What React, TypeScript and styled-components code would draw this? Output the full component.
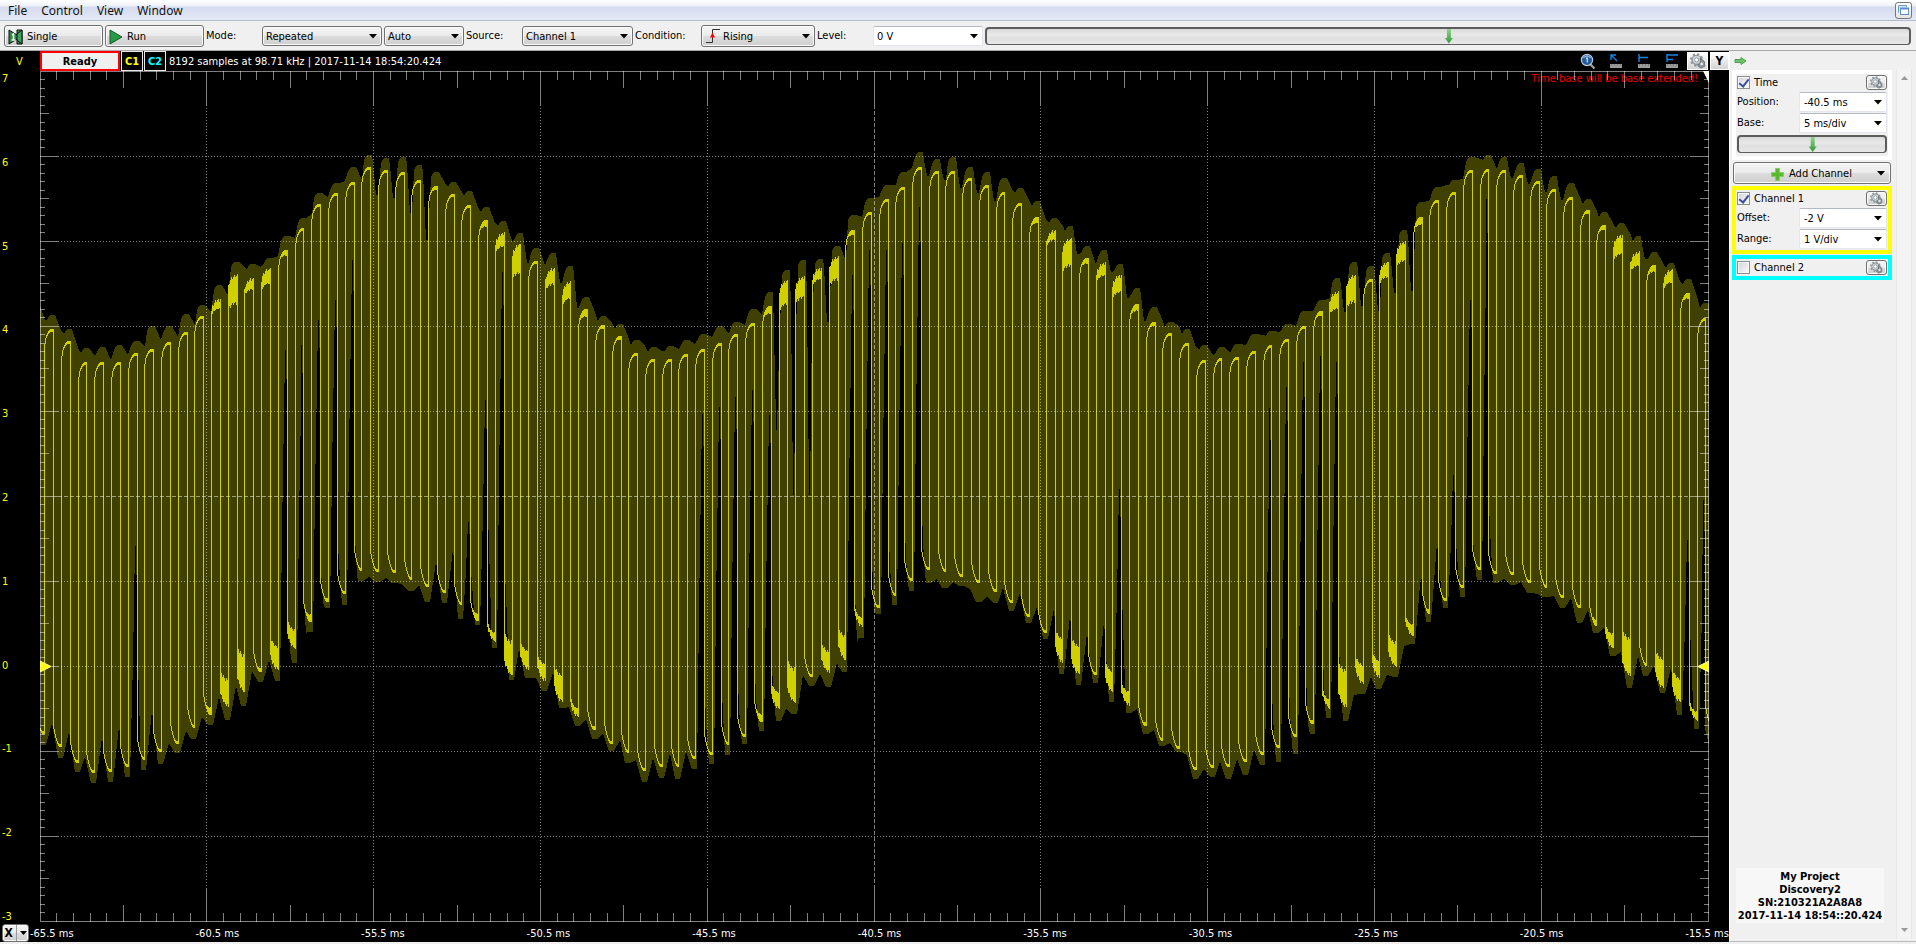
import React from "react";
import styled, { createGlobalStyle, css } from "styled-components";

const GlobalStyle = createGlobalStyle`
  * { box-sizing: border-box; }
  html, body { margin: 0; background: #f0f0f0; }
  body, button, select, input {
    font-family: "DejaVu Sans Condensed", "Noto Sans", sans-serif;
    font-size: 11px;
    line-height: 14px;
    color: #000;
  }
`;

/* ---------- shell ---------- */

const Shell = styled.div`
  display: flex;
  flex-direction: column;
  min-height: 100vh;
  padding-bottom: 2px;
`;

const MenuBar = styled.nav`
  display: flex;
  align-items: center;
  gap: 14px;
  height: 21px;
  padding: 0 4px 0 8px;
  background: linear-gradient(#fff 0, #eef1f8 6px, #d4dbee 7px, #e3e8f6 19px);
  border-bottom: 1px solid #b4bccb;
`;

const MenuItem = styled.button`
  padding: 1px 0 0;
  border: 0;
  background: none;
  font-family: "Noto Sans", sans-serif;
  font-size: 12px;
  color: #111;
`;

const RestoreButton = styled.button`
  display: grid;
  place-items: center;
  width: 17px;
  height: 17px;
  margin-left: auto;
  padding: 0;
  border: 1px solid #777;
  border-radius: 3px;
  background: linear-gradient(#fff, #e4e4e4);
`;

const raised = css`
  border: 1px solid #707070;
  border-radius: 3px;
  background: linear-gradient(#f4f4f4 0, #ebebeb 50%, #dcdcdc 51%, #cfcfcf 100%);
  box-shadow: inset 0 0 0 1px #fbfbfb;
`;

const Toolbar = styled.div`
  display: flex;
  align-items: center;
  gap: 2px;
  height: 30px;
  padding: 0 5px 0 4px;
  background: #f0f0f0;
  border-bottom: 1px solid #a8a8a8;
`;

const ActionButton = styled.button`
  ${raised}
  display: flex;
  flex: none;
  align-items: center;
  gap: 4px;
  width: 99px;
  height: 22px;
  padding: 2px 3px 0;
`;

const ToolLabel = styled.label<{ $w: number }>`
  flex: none;
  width: ${(p) => p.$w}px;
`;

const SelectBox = styled.span<{ $w?: number; $flat?: boolean; $h?: number }>`
  position: relative;
  display: flex;
  flex: none;
  width: ${(p) => (p.$w ? `${p.$w}px` : "auto")};
  height: ${(p) => p.$h ?? 20}px;
`;

const NativeSelect = styled.select<{ $flat?: boolean; $pad?: number }>`
  ${raised}
  appearance: none;
  width: 100%;
  height: 100%;
  padding: 2px 16px 0 ${(p) => p.$pad ?? 3}px;
  ${(p) =>
    p.$flat &&
    css`
      background: #fff;
      border: 1px solid #e3e6ee;
      border-top-color: #b4b8c2;
      border-radius: 2px;
      box-shadow: none;
    `}
`;

const Caret = styled.svg<{ $right?: number }>`
  position: absolute;
  right: ${(p) => p.$right ?? 5}px;
  top: calc(50% - 2px);
  pointer-events: none;
`;

const LeadIcon = styled.span`
  position: absolute;
  left: 4px;
  top: 3px;
  pointer-events: none;
  line-height: 0;
`;

const SliderTrack = styled.div<{ $h: number }>`
  position: relative;
  display: flex;
  flex: 1;
  height: ${(p) => p.$h}px;
  border: 2px solid #5c5c5c;
  border-bottom-width: 1px;
  border-radius: 4px;
  background: linear-gradient(#d9d9d9, #e9e9e9 40%, #dfdfdf 60%, #e8e8e8);
`;

const SliderInput = styled.input`
  appearance: none;
  flex: 1;
  min-width: 0;
  margin: 0;
  background: none;
  &::-webkit-slider-thumb {
    appearance: none;
    width: 8px;
    height: 15px;
    background: linear-gradient(#8fd48a, #2f9a3a);
    clip-path: polygon(25% 0, 75% 0, 75% 64%, 100% 64%, 50% 100%, 0 64%, 25% 64%);
  }
`;

/* ---------- scope ---------- */

const Workspace = styled.main`
  display: grid;
  flex: 1;
  grid-template-columns: 1fr 187px;
`;

const Scope = styled.section`
  display: grid;
  grid-template-columns: 40px 1fr 20px;
  grid-template-rows: 20px 1fr 20px;
  min-width: 0;
  background: #000;
  color: #fff;
`;

const Unit = styled.div`
  padding: 4px 0 0 16px;
  color: #ff0;
`;

const StatusBar = styled.div`
  grid-column: 2 / 4;
  display: flex;
  align-items: stretch;
`;

const Ready = styled.div`
  width: 80px;
  margin-right: 1px;
  padding-top: 2px;
  border: 2px solid #f00;
  background: #f0f0f0;
  color: #000;
  font-weight: bold;
  text-align: center;
`;

const ChannelTag = styled.button<{ $c: string }>`
  width: 22px;
  margin-right: 1px;
  padding: 2px 0 0;
  border: 1px solid #e6e6e6;
  background: #000;
  color: ${(p) => p.$c};
  font-weight: bold;
`;

const SampleInfo = styled.div`
  flex: 1;
  padding: 4px 0 0 2px;
  white-space: nowrap;
`;

const ScopeTools = styled.div`
  display: flex;
  align-items: center;
  gap: 12px;
`;

const ToolButton = styled.button`
  width: 16px;
  height: 18px;
  padding: 0;
  border: 0;
  background: none;
  line-height: 0;
`;

const SquareGroup = styled.div`
  display: flex;
  align-items: center;
  gap: 2px;
  margin-left: -5px;
`;

const SquareButton = styled.button<{ $w: number }>`
  display: grid;
  place-items: center;
  width: ${(p) => p.$w}px;
  height: 18px;
  padding: 0;
  border: 1px solid #fff;
  background: linear-gradient(#fff, #d4d4d4);
  font-weight: bold;
  font-size: 12px;
`;

const YAxis = styled.div`
  display: flex;
  flex-direction: column;
  justify-content: space-between;
  padding: 1px 0 0 2px;
  margin-bottom: -2px;
  color: #ff0;
`;

const Plot = styled.div`
  position: relative;
  min-height: 400px;
`;

const PlotSvg = styled.svg`
  position: absolute;
  inset: 0;
  width: 100%;
  height: 100%;
`;

const Warning = styled.div`
  position: absolute;
  top: 1px;
  right: 11px;
  color: #f00000;
`;

const XAxis = styled.div`
  grid-column: 1 / 4;
  display: flex;
  align-items: center;
  gap: 1px;
  padding: 2px 0 0 2px;
`;

const SplitButton = styled.button`
  ${raised}
  display: flex;
  align-items: center;
  justify-content: space-around;
  width: 27px;
  height: 18px;
  padding: 0;
  font-weight: bold;
  font-size: 12px;
`;

const Divider = styled.span`
  width: 1px;
  height: 16px;
  background: #999;
`;

const XLabels = styled.div`
  display: flex;
  flex: 1;
  justify-content: space-between;
  padding-top: 2px;
  white-space: nowrap;
`;

/* ---------- side panel ---------- */

const Side = styled.aside`
  display: grid;
  grid-template-columns: 1fr 16px;
  grid-template-rows: 18px 1fr;
  column-gap: 4px;
  padding: 0 4px 2px 2px;
  background: #f0f0f0;
  border-left: 1px solid #fff;
  border-bottom: 1px solid #bbb;
`;

const PinButton = styled.button`
  grid-column: 1 / 3;
  width: 16px;
  padding: 2px 0 0;
  border: 0;
  background: none;
  line-height: 0;
`;

const Panels = styled.div`
  display: flex;
  flex-direction: column;
  gap: 1px;
  padding-top: 1px;
`;

const Group = styled.section<{ $c: string }>`
  display: flex;
  flex-direction: column;
  gap: 1px;
  padding: 1px;
  border: 4px solid ${(p) => p.$c};
  background: #f0f0f0;
`;

const GroupHead = styled.div`
  display: flex;
  align-items: center;
  justify-content: space-between;
  height: 15px;
  &:not(:last-child) {
    margin-bottom: 1px;
  }
`;

const CheckLabel = styled.label`
  display: flex;
  align-items: center;
  gap: 4px;
`;

const Check = styled.input`
  appearance: none;
  width: 13px;
  height: 13px;
  margin: 0;
  border: 1px solid #8a8f94;
  background: linear-gradient(135deg, #d0d4da, #fafafa) #fff;
  box-shadow: inset 0 0 0 1px #f6f6f6;
  display: grid;
  place-items: center;
  &:checked::after {
    content: "";
    width: 4px;
    height: 8px;
    margin-top: -2px;
    border: solid #3c4f9c;
    border-width: 0 2px 2px 0;
    transform: rotate(38deg);
  }
`;

const GearButton = styled.button`
  ${raised}
  display: grid;
  place-items: center;
  width: 21px;
  height: 15px;
  padding: 0;
`;

const Field = styled.div`
  display: grid;
  grid-template-columns: 62px 1fr;
  align-items: center;
  height: 20px;
`;

const SliderRow = styled.div`
  display: flex;
  padding: 1px 0 2px;
`;

const AddButton = styled.button`
  ${raised}
  position: relative;
  display: flex;
  align-items: center;
  justify-content: center;
  gap: 4px;
  height: 22px;
  margin: 1px;
  padding: 2px 2px 0 0;
`;

const Info = styled.div`
  width: 148px;
  margin: auto 0 16px 4px;
  padding: 2px 0 1px;
  background: #f7f7f7;
  font-weight: bold;
  line-height: 13px;
  text-align: center;
  white-space: nowrap;
`;

const ScrollBar = styled.div`
  display: flex;
  flex-direction: column;
  justify-content: space-between;
  align-items: center;
  padding: 5px 0;
  background: #f3f3f3;
  border: solid #e8e8e8;
  border-width: 0 1px;
`;

const ScrollArrow = styled.button`
  padding: 0;
  border: 0;
  background: none;
  line-height: 0;
`;

/* ---------- icons ---------- */

const DownArrow = ({ right }: { right?: number }) => (
  <Caret width="8" height="5" viewBox="0 0 8 5" $right={right}>
    <path d="M0 0H8L4 4.5Z" fill="#000" />
  </Caret>
);

const Gear = ({ size = 14 }: { size?: number }) => (
  <svg width={size} height={size} viewBox="0 0 14 14">
    <circle cx="5.8" cy="6" r="5" fill="none" stroke="#8b959b" strokeWidth="1.6" strokeDasharray="2 1.9" />
    <circle cx="5.8" cy="6" r="4" fill="#cfd6d9" stroke="#828d93" />
    <circle cx="5.8" cy="6" r="1.8" fill="#fff" stroke="#8d979c" strokeWidth="0.8" />
    <path d="M9 4.5L12.6 7.5L12.8 11.6L9.4 13.2L6.6 11L9 9Z" fill="#8f999d" stroke="#5f696e" strokeWidth="0.7" />
    <circle cx="10.2" cy="9.6" r="1.2" fill="#e8ecee" />
  </svg>
);

const SingleIcon = () => (
  <svg width="15" height="16" viewBox="0 0 15 16">
    <path d="M1 1L9 6V1H14V15H9V10L1 15Z" fill="#2c8a45" stroke="#111" />
    <path d="M9 5L14 1V15L9 11Z" fill="#3da35a" stroke="#111" />
    <path d="M4 6L5.5 5V11M3.5 11H7.5" fill="none" stroke="#fff" strokeWidth="1.6" />
  </svg>
);

const RunIcon = () => (
  <svg width="14" height="16" viewBox="0 0 14 16">
    <path d="M1 1L13 8L1 15Z" fill="#279a45" stroke="#1a5a2b" />
  </svg>
);

const RisingIcon = () => (
  <svg width="16" height="16" viewBox="0 0 16 16">
    <path d="M1 14.5H7.5V1.5H15" fill="none" stroke="#333" />
    <path d="M7.5 4.5L10 9.5H5Z" fill="#f00" />
  </svg>
);

const ZoomIcon = () => (
  <svg width="16" height="18" viewBox="0 0 16 18">
    <path d="M10 12L14.5 16.5" stroke="#9a9a9a" strokeWidth="2.4" />
    <circle cx="7" cy="8" r="5.6" fill="#235a9c" stroke="#b9c6d4" strokeWidth="1.2" />
    <path d="M3.5 6A4 4 0 0 1 10.5 6" fill="none" stroke="#7fa9d8" strokeWidth="1.4" />
    <path d="M6 6.6L7.2 5.6V10.5" fill="none" stroke="#fff" />
  </svg>
);

const RulerIcon = ({ d }: { d: string }) => (
  <svg width="16" height="18" viewBox="0 0 16 18">
    <rect x="2" y="12" width="12" height="4" fill="#9c9c9c" />
    <path d="M3.5 12V14M6.5 12V14M9.5 12V14M12.5 12V14" stroke="#777" />
    <path d={d} fill="none" stroke="#1786e0" strokeWidth="1.4" />
  </svg>
);

/* ---------- trace data ---------- */

// Screen rows are measured from the window top; the plot starts at row 71.
const TOP = 71;
const LEFT = 40;

const peaks = [
  329, 341, 362, 362, 362, 353, 349, 342, 332, 316, 299, 274, 278, 268, 250, 228, 204, 193, 182, 167,
  170, 172, 180, 186, 194, 205, 220, 232, 244, 261, 268, 281, 309, 325, 336, 353, 359, 359, 354, 349,
  343, 334, 323, 306, 280, 276, 268, 256, 230, 212, 199, 187, 167, 171, 171, 178, 185, 192, 203, 217,
  230, 238, 258, 262, 275, 304, 322, 333, 343, 360, 358, 357, 351, 345, 339, 326, 311, 291, 275, 279,
  262, 241, 217, 200, 192, 170, 169, 170, 175, 181, 189, 197, 210, 225, 235, 251, 265, 269, 293, 318,
];

const troughs = [
  734, 747, 763, 773, 772, 767, 760, 752, 744, 728, 715, 707, 692, 672, 670, 649, 622, 602, 594, 571,
  572, 573, 580, 587, 593, 605, 621, 642, 675, 670, 681, 702, 717, 730, 744, 753, 771, 767, 767, 759,
  755, 745, 737, 722, 709, 703, 677, 673, 660, 627, 608, 596, 581, 570, 572, 577, 583, 592, 603, 617,
  633, 663, 674, 675, 692, 706, 726, 741, 749, 770, 768, 767, 762, 755, 748, 737, 724, 709, 707, 684,
  678, 667, 636, 614, 601, 588, 570, 574, 575, 583, 588, 598, 608, 626, 648, 676, 666, 688, 702, 721, 727,
];

const peakRing: Record<number, number> = {
  10: 10, 11: 30, 12: 12, 13: 16, 14: 6, 23: 4, 26: 7, 27: 15, 28: 30, 30: 17, 31: 18, 32: 8, 33: 4, 34: 4,
  43: 8, 44: 25, 45: 22, 46: 12, 47: 24, 48: 5, 59: 6, 60: 10, 61: 28, 62: 6, 63: 14, 64: 18, 65: 7, 66: 4,
  76: 5, 77: 18, 78: 28, 80: 16, 81: 20, 82: 8, 92: 4, 93: 5, 94: 20, 95: 15, 96: 7, 97: 14, 98: 6,
};

const troughRing: Record<number, number> = {
  10: 8, 11: 28, 12: 38, 13: 4, 14: 25, 15: 20, 16: 8, 17: 4, 26: 8, 27: 10, 28: 35, 29: 20, 30: 18, 31: 28,
  32: 10, 33: 4, 43: 8, 44: 18, 45: 35, 47: 22, 48: 25, 49: 10, 61: 25, 62: 30, 64: 22, 65: 15, 66: 4,
  76: 4, 77: 10, 78: 38, 79: 20, 80: 18, 81: 25, 82: 12, 83: 5, 93: 7, 94: 15, 95: 38, 97: 30, 98: 25, 99: 10,
};

// Noise band: [crest row, row of the notch after it]
const bandTop: [number, number][] = [
  [315, 330], [329, 348], [348, 356], [347, 360], [345, 355], [341, 347], [326, 340], [326, 337], [314, 325],
  [305, 312], [285, 295], [262, 268], [264, 267], [258, 256], [236, 238], [218, 214], [193, 197], [183, 181],
  [167, 180], [155, 195], [158, 198], [157, 213], [165, 240], [172, 183], [182, 192], [191, 207], [207, 223],
  [221, 241], [233, 263], [248, 265], [253, 283], [266, 308], [297, 312], [316, 323], [324, 339], [340, 346],
  [347, 351], [346, 349], [340, 344], [334, 337], [326, 334], [322, 325], [309, 314], [292, 430], [270, 495],
  [260, 495], [259, 322], [246, 261], [215, 217], [198, 197], [185, 185], [172, 168], [152, 176], [159, 180],
  [157, 188], [167, 193], [172, 201], [178, 191], [188, 200], [201, 220], [218, 226], [226, 254], [246, 264],
  [250, 272], [264, 298], [288, 321], [307, 321], [322, 326], [329, 347], [345, 355], [347, 353], [344, 345],
  [334, 335], [331, 332], [324, 326], [311, 311], [300, 298], [278, 312], [262, 306], [266, 311], [253, 293],
  [230, 291], [202, 200], [187, 185], [180, 179], [157, 159], [155, 169], [157, 178], [163, 184], [169, 192],
  [176, 200], [183, 197], [199, 211], [212, 223], [223, 233], [236, 259], [252, 263], [263, 282], [279, 296],
  [303, 312],
];

// Noise band: [floor row, row of the notch after it]
const bandBottom: [number, number][] = [
  [745, 723], [758, 732], [772, 757], [783, 737], [782, 726], [777, 546], [770, 710], [764, 743], [753, 731],
  [739, 717], [725, 697], [720, 686], [706, 671], [682, 660], [681, 350], [663, 345], [632, 320], [608, 300],
  [605, 260], [581, 577], [582, 578], [583, 585], [591, 585], [602, 562], [603, 548], [619, 522], [625, 400],
  [648, 272], [680, 649], [678, 678], [691, 672], [708, 707], [726, 719], [739, 733], [751, 740], [763, 760],
  [782, 758], [778, 753], [779, 752], [769, 414], [764, 407], [755, 397], [744, 390], [731, 415], [721, 709],
  [714, 675], [686, 674], [687, 663], [672, 275], [638, 250], [614, 250], [605, 243], [591, 207], [583, 579],
  [588, 582], [586, 589], [602, 596], [603, 588], [611, 593], [623, 607], [639, 609], [674, 615], [685, 633],
  [683, 621], [702, 489], [713, 709], [734, 730], [746, 743], [752, 755], [779, 769], [777, 761], [779, 759],
  [775, 750], [765, 408], [762, 387], [754, 362], [734, 356], [718, 362], [721, 695], [694, 677], [689, 675],
  [677, 646], [644, 574], [622, 542], [608, 475], [597, 300], [580, 199], [583, 579], [585, 582], [593, 594],
  [597, 596], [608, 598], [623, 610], [633, 627], [656, 652], [688, 656], [676, 666], [693, 668], [715, 540],
  [729, 500],
];

const riseAt = (k: number) => Math.floor(44.7 + 16.69 * k) - LEFT;
const fallAt = (k: number) => Math.floor(44.7 + 16.69 * k + 8.9) - LEFT;

function buildTrace() {
  const d: string[] = [];
  const column = (x: number, a: number, b: number) => d.push(`M${x + 0.5} ${a - TOP}V${b - TOP}`);
  const attack = [30, 15, 9, 6, 4, 2, 1, 0, 0, 0, 0];
  const decay = [28, 18, 13, 9, 6, 3, 1, 0, 0, 0, 0];
  const noise = (k: number, i: number) => ((i * 7 + k * 5 + i * i * 3) % 6) / 6;

  peaks.forEach((top, k) => {
    const r = riseAt(k);
    const f = fallAt(k);
    const ring = peakRing[k] ?? 0;
    const wild = ring > 9;
    column(r, top + 22, troughs[k]);
    for (let i = 0; i < f - r; i++) {
      const y = top + attack[i + 1] * (wild ? 0.7 : 1) + (wild ? noise(k, i) * 4 : 0);
      const joined = top + attack[i];
      const body = ring && i ? top + attack[i + 1] * 0.5 + ring * (0.9 + noise(k, i + 2) * 0.15) : 0;
      column(r + i, y, Math.max(y + 3, joined, body));
    }
    column(f, top, troughs[k + 1] - 22);
  });

  troughs.forEach((low, k) => {
    const f = k ? fallAt(k - 1) : -4;
    const r = k < peaks.length ? riseAt(k) : f + 8;
    const ring = troughRing[k] ?? 0;
    const wild = ring > 9;
    for (let i = 0; i <= r - f; i++) {
      const y = low - decay[i + 1] * (wild ? 0.7 : 1) - (wild ? noise(k, i) * 4 : 0);
      const joined = low - decay[i];
      const body = ring && i ? low - decay[i + 1] * 0.5 - ring * (0.9 + noise(k, i + 1) * 0.15) : y;
      column(f + i, Math.min(y - 3, joined, body), y);
    }
  });
  return d.join("");
}

function buildBand() {
  const pts: [number, number][] = [[0, 306], [5, 320]];
  bandTop.forEach(([crest, notch], k) => {
    const r = riseAt(k);
    const next = r + 17;
    pts.push([r + 3, crest + 5], [r + 5, crest + 1], [r + 7, crest], [r + 11, crest]);
    if (notch - crest > 100) {
      pts.push([r + 12, crest + 40], [r + 14, notch - 10], [r + 14, notch], [next - 2, notch], [next, crest + 60]);
    } else if (notch - crest > 20) {
      pts.push([r + 12, crest + 8], [next - 2, notch], [next, notch]);
    } else {
      pts.push([next, notch]);
    }
  });
  pts.push([1669, 318]);
  const low: [number, number][] = [];
  bandBottom.forEach(([floor, notch], k) => {
    const r = riseAt(k);
    const f = fallAt(k);
    const span = floor - notch;
    low.push([r - 3, floor], [r + 2, floor]);
    if (span > 240) {
      low.push(
        [r + 3, floor - span * 0.2],
        [r + 4, floor - span * 0.45],
        [r + 6, notch + span * 0.2],
        [f - 2, notch],
        [f - 1, notch],
        [f + 1, notch + span * 0.35],
        [f + 1, floor - span * 0.2],
        [f + 3, floor - 30],
      );
    } else if (span > 90) {
      low.push([r + 5, floor - span * 0.5], [f - 2, notch], [f - 1, notch], [f + 1, notch + span * 0.5]);
    } else {
      low.push([f - 1, notch]);
    }
  });
  low.push([1665, 729], [1669, 745]);
  return [...pts, ...low.reverse()].map(([x, y]) => `${x},${y - TOP}`).join(" ");
}

function buildTicks() {
  const d: string[] = [];
  for (let j = 1; j < 100; j++) {
    const x = Math.floor(16.68 * j) + 0.5;
    const len = j % 10 === 0 ? 34 : j % 5 === 0 ? 17 : 9;
    d.push(`M${x} 0V${len}M${x} 851V${851 - len}`);
    const y = Math.floor(8.5 * j) + 0.5;
    const w = j % 10 === 0 ? 18 : j % 5 === 0 ? 9 : 5;
    d.push(`M0 ${y}H${w}M1669 ${y}H${1669 - w}`);
  }
  return d.join("");
}

const trace = buildTrace();
const band = buildBand();
const ticks = buildTicks();
const divisions = [1, 2, 3, 4, 5, 6, 7, 8, 9];

const Waveform = () => (
  <PlotSvg viewBox="0 0 1669 851" preserveAspectRatio="none" shapeRendering="crispEdges" role="img" aria-label="Channel 1 waveform">
    <polygon points={band} fill="#404000" />
    <path d={trace} stroke="#d0d000" fill="none" />
    <g stroke="#fff" strokeOpacity="0.5" fill="none">
      {divisions.map((i) => (
        <g key={i}>
          <path d={`M${Math.floor(166.8 * i) + 0.5} 34V817`} strokeDasharray={i === 5 ? "4 2" : "1 2"} />
          <path d={`M18 ${85 * i + 0.5}H1651`} strokeDasharray={i === 5 ? "4 2" : "1 2"} />
        </g>
      ))}
      <path d={ticks} />
      <rect x="0.5" y="0.5" width="1668" height="850" />
    </g>
    <g shapeRendering="auto">
      <path d="M1663 0H1669V12Z" fill="#fff" />
      <path d="M0 590L11 595.5L0 601Z" fill="#ff0" stroke="#ffffb0" />
      <path d="M1669 590L1658 595.5L1669 601Z" fill="#ff0" stroke="#ffffb0" />
    </g>
  </PlotSvg>
);

/* ---------- controls ---------- */

type DropProps = { id: string; value: string; w?: number; h?: number; flat?: boolean; pad?: number; icon?: React.ReactNode };

const Drop = ({ id, value, w, h, flat, pad, icon }: DropProps) => (
  <SelectBox $w={w} $h={h}>
    <NativeSelect id={id} aria-label={id} $flat={flat} $pad={pad}>
      <option>{value}</option>
    </NativeSelect>
    {icon && <LeadIcon>{icon}</LeadIcon>}
    <DownArrow />
  </SelectBox>
);

const Slider = ({ label, value, h }: { label: string; value: number; h: number }) => (
  <SliderTrack $h={h}>
    <SliderInput type="range" aria-label={label} min={0} max={1000} defaultValue={value} />
  </SliderTrack>
);

const Header = ({ name, checked }: { name: string; checked?: boolean }) => (
  <GroupHead>
    <CheckLabel>
      <Check type="checkbox" defaultChecked={checked} />
      {name}
    </CheckLabel>
    <GearButton aria-label={`${name} settings`}>
      <Gear size={13} />
    </GearButton>
  </GroupHead>
);

const Setting = ({ id, label, value }: { id: string; label: string; value: string }) => (
  <Field>
    <label htmlFor={id}>{label}</label>
    <Drop id={id} value={value} flat pad={4} />
  </Field>
);

export default function App() {
  return (
    <Shell>
      <GlobalStyle />
      <MenuBar>
        {["File", "Control", "View", "Window"].map((m) => (
          <MenuItem key={m}>{m}</MenuItem>
        ))}
        <RestoreButton aria-label="Restore window">
          <svg width="13" height="12" viewBox="0 0 13 12">
            <path d="M1.5 8.5V1.5H9.5V3" fill="#dbe9f8" stroke="#6c9bd2" />
            <rect x="3.5" y="4.5" width="8" height="6" fill="#fff" stroke="#5c8fcc" />
            <path d="M3 4.5H12" stroke="#5c8fcc" strokeWidth="2" />
          </svg>
        </RestoreButton>
      </MenuBar>

      <Toolbar>
        <ActionButton>
          <SingleIcon />
          Single
        </ActionButton>
        <ActionButton>
          <RunIcon />
          Run
        </ActionButton>
        <ToolLabel $w={54} htmlFor="mode">Mode:</ToolLabel>
        <Drop id="mode" value="Repeated" w={120} />
        <Drop id="trigger" value="Auto" w={80} />
        <ToolLabel $w={54} htmlFor="source">Source:</ToolLabel>
        <Drop id="source" value="Channel 1" w={111} />
        <ToolLabel $w={64} htmlFor="condition">Condition:</ToolLabel>
        <Drop id="condition" value="Rising" w={114} h={22} pad={21} icon={<RisingIcon />} />
        <ToolLabel $w={54} htmlFor="level">Level:</ToolLabel>
        <Drop id="level" value="0 V" w={110} flat />
        <Slider label="Level position" value={501} h={18} />
      </Toolbar>

      <Workspace>
        <Scope>
          <Unit>V</Unit>
          <StatusBar>
            <Ready>Ready</Ready>
            <ChannelTag $c="#ff0">C1</ChannelTag>
            <ChannelTag $c="#0ff">C2</ChannelTag>
            <SampleInfo>8192 samples at 98.71 kHz | 2017-11-14 18:54:20.424</SampleInfo>
            <ScopeTools>
              <ToolButton aria-label="Zoom"><ZoomIcon /></ToolButton>
              <ToolButton aria-label="Pointer"><RulerIcon d="M9 9L3.5 3.5M3 8V3H8" /></ToolButton>
              <ToolButton aria-label="Vertical cursors"><RulerIcon d="M3 2V10M3 5.5H12" /></ToolButton>
              <ToolButton aria-label="Horizontal cursors"><RulerIcon d="M3 2V10M3 3H14M3 7.5H9" /></ToolButton>
              <SquareGroup>
                <SquareButton $w={21} aria-label="Scope settings"><Gear size={16} /></SquareButton>
                <SquareButton $w={19}>Y</SquareButton>
              </SquareGroup>
            </ScopeTools>
          </StatusBar>
          <YAxis>
            {[7, 6, 5, 4, 3, 2, 1, 0, -1, -2, -3].map((v) => (
              <span key={v}>{v}</span>
            ))}
          </YAxis>
          <Plot>
            <Warning>Time base will be base extended!</Warning>
            <Waveform />
          </Plot>
          <XAxis>
            <SplitButton>
              X
              <Divider />
              <svg width="7" height="4" viewBox="0 0 7 4"><path d="M0 0H7L3.5 4Z" /></svg>
            </SplitButton>
            <XLabels>
              {["-65.5", "-60.5", "-55.5", "-50.5", "-45.5", "-40.5", "-35.5", "-30.5", "-25.5", "-20.5", "-15.5"].map((t) => (
                <span key={t}>{t} ms</span>
              ))}
            </XLabels>
          </XAxis>
        </Scope>

        <Side>
          <PinButton aria-label="Hide panel">
            <svg width="13" height="8" viewBox="0 0 13 8">
              <path d="M1 2.5H7V.5L12 4L7 7.5V5.5H1Z" fill="#6fc36b" stroke="#4a9e4d" />
            </svg>
          </PinButton>
          <Panels>
            <Group $c="#fff">
              <Header name="Time" checked />
              <Setting id="position" label="Position:" value="-40.5 ms" />
              <Setting id="base" label="Base:" value="5 ms/div" />
              <SliderRow>
                <Slider label="Time base" value={505} h={18} />
              </SliderRow>
            </Group>
            <AddButton>
              <svg width="15" height="15" viewBox="0 0 15 15">
                <path d="M5.5 1.5H9.5V5.5H13.5V9.5H9.5V13.5H5.5V9.5H1.5V5.5H5.5Z" fill="#5cb82c" stroke="#86cc66" />
              </svg>
              Add Channel
              <DownArrow />
            </AddButton>
            <Group $c="#ff0">
              <Header name="Channel 1" checked />
              <Setting id="offset" label="Offset:" value="-2 V" />
              <Setting id="range" label="Range:" value="1 V/div" />
            </Group>
            <Group $c="#0ff">
              <Header name="Channel 2" />
            </Group>
            <Info>
              My Project
              <br />
              Discovery2
              <br />
              SN:210321A2A8A8
              <br />
              2017-11-14 18:54::20.424
            </Info>
          </Panels>
          <ScrollBar>
            <ScrollArrow aria-label="Scroll up">
              <svg width="7" height="8" viewBox="0 0 7 8"><path d="M0 6H7L3.5 2Z" fill="#999" /></svg>
            </ScrollArrow>
            <ScrollArrow aria-label="Scroll down">
              <svg width="7" height="8" viewBox="0 0 7 8"><path d="M0 2H7L3.5 6Z" fill="#999" /></svg>
            </ScrollArrow>
          </ScrollBar>
        </Side>
      </Workspace>
    </Shell>
  );
}
